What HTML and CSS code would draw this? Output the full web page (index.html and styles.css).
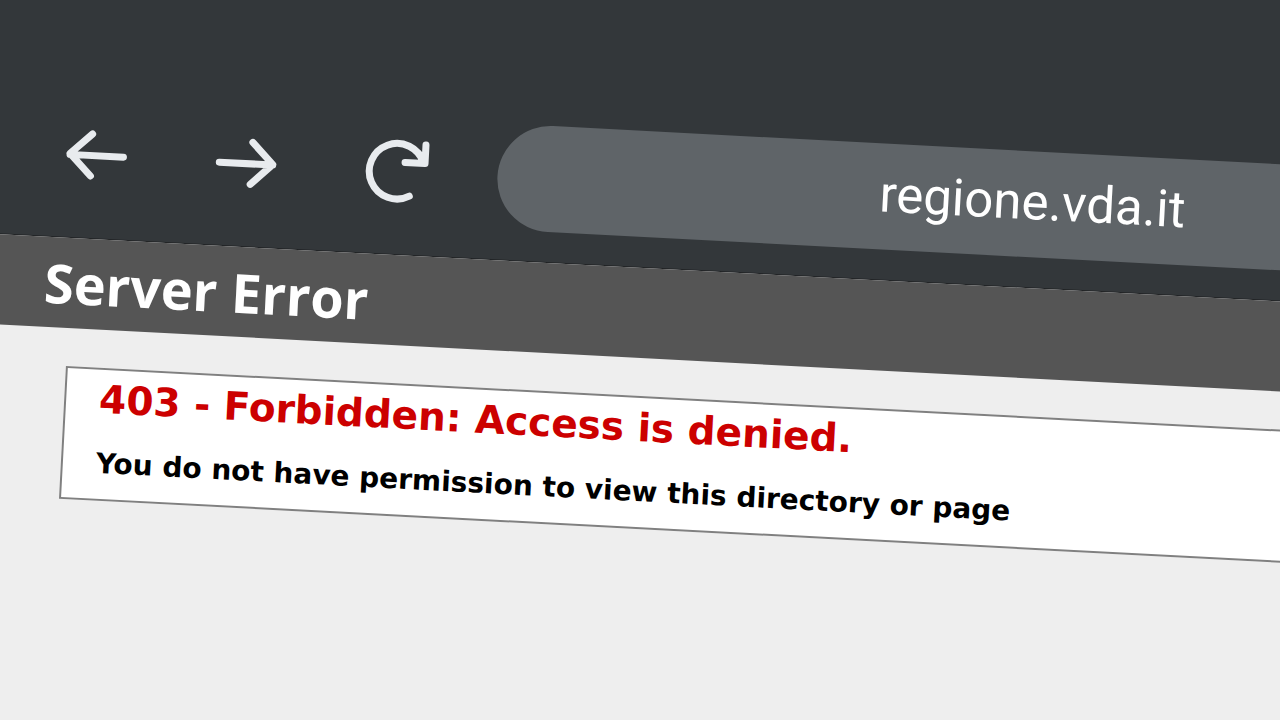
FILE: index.html
```
<!DOCTYPE html>
<html lang="en">
<head>
    <meta charset="UTF-8">
    <meta name="viewport" content="width=device-width, initial-scale=1.0">
    <title>403 - Forbidden: Access is denied.</title>
    <link rel="stylesheet" href="styles.css">
</head>
<body>
<div class="browser">
  <nav class="toolbar">
    <div class="toolbar__buttons">
      <button class="icon-btn" type="button" aria-label="Back">
        <svg viewBox="0 0 64 64"><path d="M59.5 32.5H6M27.5 11L6 31.5l21.5 21.5" /></svg>
      </button>
      <button class="icon-btn" type="button" aria-label="Forward">
        <svg viewBox="0 0 64 64"><path d="M5.5 32.5H59M38 11L59 32 37.5 53" /></svg>
      </button>
      <button class="icon-btn" type="button" aria-label="Reload">
        <svg viewBox="0 0 64 64"><path d="M47 56.5A27.8 27.8 0 1 1 59.5 22.5M61 4.5V23H41" /></svg>
      </button>
    </div>
    <input class="address" type="text" aria-label="Address" value="regione.vda.it">
  </nav>

  <main class="page">
    <header class="page__header">
      <h1>Server Error</h1>
    </header>
    <section class="error">
      <h2>403 - Forbidden: Access is denied.</h2>
      <h3>You do not have permission to view this directory or page</h3>
    </section>
  </main>
</div>
</body>
</html>
```
FILE: styles.css
```
:root {
    --clr-toolbar: #33373a;
    --clr-address: #5f6468;
    --clr-icon: #e8ebee;
    --clr-header: #555555;
    --clr-page: #eeeeee;
    --clr-error: #cc0000;
}

* {
    box-sizing: border-box;
}

body {
    margin: 0;
    height: 100vh;
    overflow: hidden;
    background: var(--clr-toolbar);
}

h1,
h2,
h3 {
    margin: 0;
    white-space: nowrap;
}

/* the whole window is tilted and runs off the right edge */
.browser {
    width: 130vw;
    min-height: 102vh;
    display: flex;
    flex-direction: column;
    transform: rotate(3deg);
    transform-origin: 0 0;
}

/* toolbar */

.toolbar {
    display: flex;
    align-items: center;
    gap: 70px;
    padding: 97px 0 30px 72px;
    border-bottom: 1px solid #222426;
}

.toolbar__buttons {
    display: flex;
    gap: 86px;
}

.icon-btn {
    width: 64px;
    height: 64px;
    padding: 0;
    border: 0;
    background: none;
}

.icon-btn svg {
    display: block;
    overflow: visible;
    fill: none;
    stroke: var(--clr-icon);
    stroke-width: 7;
    stroke-linecap: round;
    stroke-linejoin: round;
}

.address {
    flex: none;
    width: 84vw;
    height: 106px;
    padding: 0 4px 6px 0;
    border: 0;
    border-radius: 53px;
    background: var(--clr-address);
    color: #fff;
    font-family: Roboto, sans-serif;
    font-size: 51px;
    text-align: center;
}

/* error page */

.page {
    flex: 1;
    background: var(--clr-page);
}

.page__header {
    padding: 10px 59px;
    background: var(--clr-header);
    color: #fff;
}

.page__header h1 {
    font-family: "Trebuchet MS", "Open Sans", sans-serif;
    font-size: 54px;
    font-weight: 700;
    line-height: 70px;
}

.error {
    margin: 38px 0 0 85px;
    padding: 6px 33px 13px;
    border: 2px solid #808080;
    background: #fff;
    font-family: Verdana, "DejaVu Sans", sans-serif;
}

.error h2 {
    color: var(--clr-error);
    font-size: 39px;
    line-height: 48px;
}

.error h3 {
    margin-top: 20px;
    padding-bottom: 2px;
    font-size: 28px;
    line-height: 40px;
}
```
